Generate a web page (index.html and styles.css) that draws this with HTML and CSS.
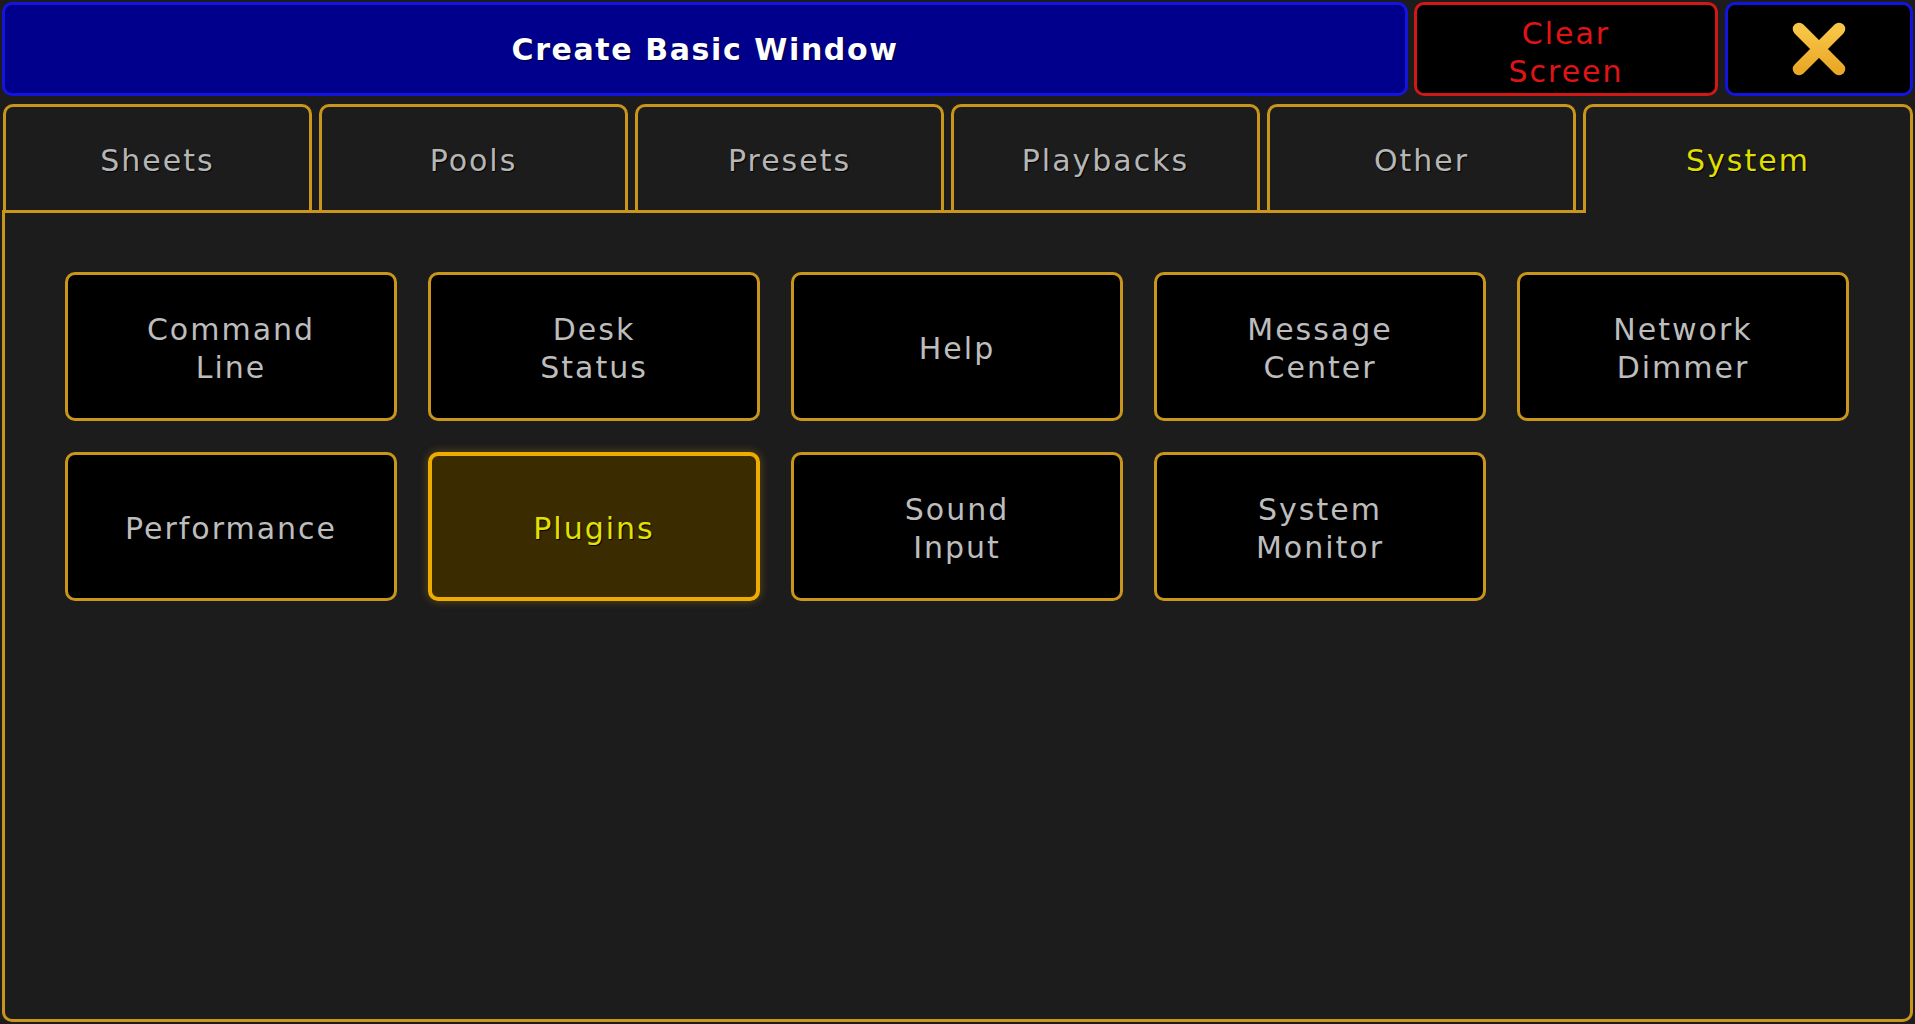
FILE: index.html
```html
<!DOCTYPE html>
<html lang="en">
<head>
<meta charset="utf-8">
<title>Create Basic Window</title>
<link rel="stylesheet" href="styles.css">
</head>
<body>
<div class="app">
  <header class="topbar">
    <div class="title">Create Basic Window</div>
    <div class="clear">Clear<br>Screen</div>
    <div class="close">
      <svg width="56" height="56" viewBox="0 0 56 56" aria-hidden="true">
        <defs>
          <linearGradient id="xg" x1="0" y1="0" x2="0" y2="1">
            <stop offset="0" stop-color="#f8c646"/>
            <stop offset="1" stop-color="#eaa828"/>
          </linearGradient>
        </defs>
        <path d="M8 8 L48 48 M48 8 L8 48" stroke="url(#xg)" stroke-width="12.5" stroke-linecap="round" fill="none"/>
      </svg>
    </div>
  </header>
  <nav class="tabs">
    <div class="tab">Sheets</div>
    <div class="tab">Pools</div>
    <div class="tab">Presets</div>
    <div class="tab">Playbacks</div>
    <div class="tab">Other</div>
    <div class="tab active">System</div>
  </nav>
  <main class="panel">
    <div class="grid">
      <div class="btn">Command<br>Line</div>
      <div class="btn">Desk<br>Status</div>
      <div class="btn">Help</div>
      <div class="btn">Message<br>Center</div>
      <div class="btn">Network<br>Dimmer</div>
      <div class="btn">Performance</div>
      <div class="btn selected">Plugins</div>
      <div class="btn">Sound<br>Input</div>
      <div class="btn">System<br>Monitor</div>
    </div>
  </main>
</div>
</body>
</html>
```

FILE: styles.css
```css
html, body {
  margin: 0;
  padding: 0;
  background: #1c1c1c;
}

body {
  font-family: "DejaVu Sans", "Noto Sans", sans-serif;
  font-size: 30px;
}

.app {
  box-sizing: border-box;
  width: 1915px;
  height: 1024px;
  padding: 2px 2px 2px 2px;
  display: flex;
  flex-direction: column;
}

/* ---------- top bar ---------- */
.topbar {
  display: flex;
  gap: 6px;
  height: 94px;
  flex: 0 0 auto;
}

.title,
.clear,
.close {
  box-sizing: border-box;
  border-radius: 10px;
  display: flex;
  align-items: center;
  justify-content: center;
  text-align: center;
}

.title {
  flex: 1;
  background: #00008c;
  border: 3px solid #1414dc;
  color: #ffffff;
  font-weight: bold;
  letter-spacing: 1.6px;
  text-shadow: 1px 1px 1px #000040;
}

.clear {
  width: 304px;
  background: #000;
  border: 3px solid #d01818;
  color: #e01414;
  letter-spacing: 2px;
  line-height: 38px;
  padding-top: 8px;
}

.close {
  width: 188px;
  margin-left: 1px;
  background: #000;
  border: 3px solid #1414e0;
}

/* ---------- tabs ---------- */
.tabs {
  margin-top: 8px;
  display: grid;
  grid-template-columns: repeat(5, 309px) 1fr;
  column-gap: 7px;
  padding-left: 1px;
  flex: 0 0 auto;
}

.tab {
  box-sizing: border-box;
  height: 106px;
  border: 3px solid #c9951b;
  border-bottom: none;
  border-radius: 10px 10px 0 0;
  background: #1c1c1c;
  color: #b6b6b6;
  letter-spacing: 2px;
  display: flex;
  align-items: center;
  justify-content: center;
  padding-top: 4px;
  text-shadow: 1px 1px 1px #000;
}

.tab.active {
  height: 109px;
  margin-bottom: -3px;
  padding-bottom: 3px;
  position: relative;
  z-index: 1;
  color: #dede00;
}

/* ---------- panel ---------- */
.panel {
  flex: 1;
  box-sizing: border-box;
  border: 3px solid #c9951b;
  border-radius: 0 0 10px 10px;
  background: #1c1c1c;
  padding: 59px 0 0 60px;
}

.grid {
  display: grid;
  grid-template-columns: repeat(5, 332px);
  grid-auto-rows: 149px;
  gap: 31px;
}

.btn {
  box-sizing: border-box;
  background: #000;
  border: 3px solid #c9951b;
  border-radius: 10px;
  color: #bdbdbd;
  letter-spacing: 2px;
  line-height: 38px;
  padding-top: 5px;
  display: flex;
  align-items: center;
  justify-content: center;
  text-align: center;
  text-shadow: 1px 1px 1px #000;
}

.btn.selected {
  background: #3b2b00;
  border: 4px solid #efac00;
  box-shadow: 0 0 10px rgba(239, 172, 0, 0.35);
  color: #e2e200;
}
```
